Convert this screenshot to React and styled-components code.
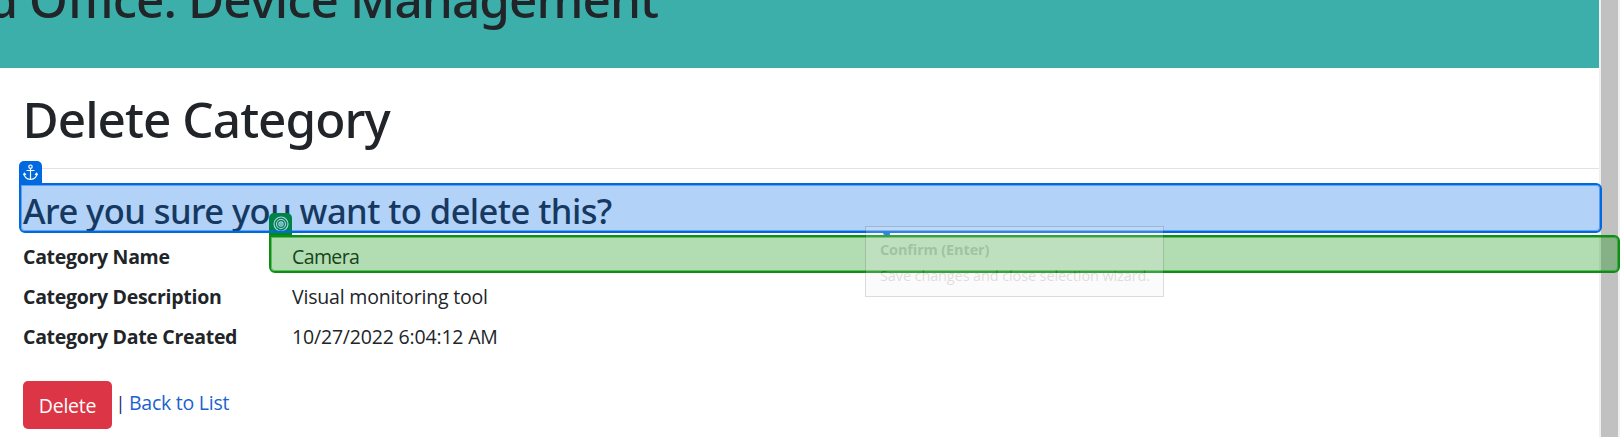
import React from "react";
import styled, { createGlobalStyle } from "styled-components";

const Global = createGlobalStyle`
  * { box-sizing: border-box; }
  body { margin: 0; background: #fff; color: #212529; overflow: hidden;
    font: 400 19.5px/30px "Open Sans", "Noto Sans", sans-serif; }
  h1, h2, dl, dt, dd, p { margin: 0; }
`;

const Screen = styled.div`
  position: relative;
  display: flex;
  width: 1620px;
  height: 437px;
  overflow: hidden;
`;
const Page = styled.main`
  width: 1599px;
  display: flex;
  flex-direction: column;
`;
const Scrollbar = styled.div`
  width: 21px;
  padding: 0 2px;
  background: #f0f0f0;
`;
const Thumb = styled.div`
  height: 100%;
  background: #c1c1c1;
`;
const Header = styled.header`
  display: flex;
  height: 68px;
  flex: none;
  overflow: hidden;
  background: #3cafaa;
`;
const Brand = styled.div`
  display: flex;
  justify-content: flex-end;
  width: 658px;
  height: 60px;
  margin-top: -31px;
  white-space: nowrap;
  font: 500 49.5px/60px "Noto Sans", sans-serif;
  letter-spacing: -0.95px;
`;
const Content = styled.section`
  padding: 21px 0 0 23px;
`;
const Heading = styled.h1`
  font: 500 49.5px/60px "Noto Sans", sans-serif;
  letter-spacing: -0.97px;
  margin-left: -0.5px;
`;
const Rule = styled.div`
  height: 1px;
  margin-top: 19px;
  background: #e1e2e3;
`;
const Question = styled.h2`
  margin-top: 21px;
  font: 500 34.5px/42px "Noto Sans", sans-serif;
  letter-spacing: -0.56px;
`;
const Details = styled.dl`
  display: grid;
  grid-template-columns: 269px 1fr;
  grid-auto-rows: 40px;
  margin-top: 10px;
`;
const Term = styled.dt`
  font-weight: 700;
  letter-spacing: -0.3px;
`;
const Value = styled.dd`
  letter-spacing: ${(p) => p.$track ?? -0.18}px;
`;
const Actions = styled.div`
  display: flex;
  align-items: flex-start;
  margin-top: 19px;
`;
const DeleteButton = styled.button`
  width: 89px;
  height: 48px;
  padding: 2px 0 0;
  border: 0;
  border-radius: 5px;
  background: #dc3545;
  color: #fff;
  font: inherit;
  letter-spacing: -0.25px;
`;
const Separator = styled.span`
  width: 17px;
  margin-top: 7px;
  text-align: center;
  font-size: 18px;
  color: #23286c;
`;
const Link = styled.a`
  margin-top: 7px;
  color: #1b62d0;
  letter-spacing: -0.25px;
`;

const Highlight = styled.div`
  position: absolute;
  left: ${(p) => p.$x}px;
  top: ${(p) => p.$y}px;
  width: ${(p) => p.$w}px;
  height: ${(p) => p.$h}px;
  border: 2px solid ${(p) => p.$color};
  border-radius: 0 6px 6px 6px;
  background: rgba(${(p) => p.$rgb}, 0.3);
  background-clip: padding-box;
  box-shadow: inset 0 0 0 1px rgba(${(p) => p.$rgb}, 0.45);
`;
const Badge = styled.div`
  position: absolute;
  left: ${(p) => p.$x}px;
  top: ${(p) => p.$y}px;
  display: flex;
  align-items: center;
  justify-content: center;
  width: 23px;
  height: ${(p) => p.$h}px;
  border-radius: 5px 5px 0 0;
  background: ${(p) => p.$color};
`;
const Dot = styled.div`
  position: absolute;
  left: 883px;
  top: 233px;
  width: 7px;
  height: 2px;
  border-radius: 0 0 2px 5px;
  background: #0069e0;
`;
const Tooltip = styled.aside`
  position: absolute;
  left: 865px;
  top: 226px;
  width: 299px;
  height: 71px;
  padding: 13px 0 0 14px;
  border: 1px solid #505050;
  background: #f0f0f0;
  color: #5a5a5a;
  opacity: 0.2;
  font-size: 14.5px;
  line-height: 20px;
  white-space: nowrap;
`;
const TipTitle = styled.p`
  font-weight: 700;
  letter-spacing: -0.13px;
`;
const TipText = styled.p`
  margin-top: 6px;
  letter-spacing: -0.12px;
`;

const Anchor = () => (
  <svg width="15" height="17" viewBox="0 0 15 17" fill="none" stroke="#fff" strokeWidth="1.2">
    <circle cx="7.5" cy="2.7" r="1.7" />
    <path d="M7.5 4.4V15.5M3.5 6.5h8M1.2 9.5c0 3.5 2.8 5.6 6.3 6 3.5-.4 6.3-2.5 6.3-6M.4 11.2l.9-1.9 1.7 1.4M14.6 11.2l-.9-1.9-1.7 1.4" />
  </svg>
);
const Target = () => (
  <svg width="16" height="16" viewBox="0 0 16 16" fill="none" stroke="#fff" strokeWidth="1.1">
    <circle cx="8" cy="8" r="7" />
    <circle cx="8" cy="8" r="4.5" />
    <circle cx="8" cy="8" r="2.1" />
    <circle cx="8" cy="8" r=".4" />
  </svg>
);

export default function App() {
  return (
    <Screen>
      <Global />
      <Page>
        <Header><Brand>d Office. Device Management</Brand></Header>
        <Content>
          <Heading>Delete Category</Heading>
          <Rule />
          <Question>Are you sure you want to delete this?</Question>
          <Details>
            <Term>Category Name</Term><Value $track={-0.6}>Camera</Value>
            <Term>Category Description</Term><Value>Visual monitoring tool</Value>
            <Term>Category Date Created</Term><Value>10/27/2022 6:04:12 AM</Value>
          </Details>
          <Actions>
            <DeleteButton>Delete</DeleteButton>
            <Separator>|</Separator>
            <Link>Back to List</Link>
          </Actions>
        </Content>
      </Page>
      <Scrollbar><Thumb /></Scrollbar>
      <Badge $x={269} $y={213} $h={22} $color="#008e00"><Target /></Badge>
      <Highlight $x={269} $y={235} $w={1351} $h={38} $color="#0b8f14" $rgb="0, 142, 0" />
      <Badge $x={19} $y={160.5} $h={23} $color="#0069e0"><Anchor /></Badge>
      <Highlight $x={19} $y={183} $w={1583} $h={50} $color="#0069e0" $rgb="0, 106, 228" />
      <Dot />
      <Tooltip>
        <TipTitle>Confirm (Enter)</TipTitle>
        <TipText>Save changes and close selection wizard.</TipText>
      </Tooltip>
    </Screen>
  );
}
